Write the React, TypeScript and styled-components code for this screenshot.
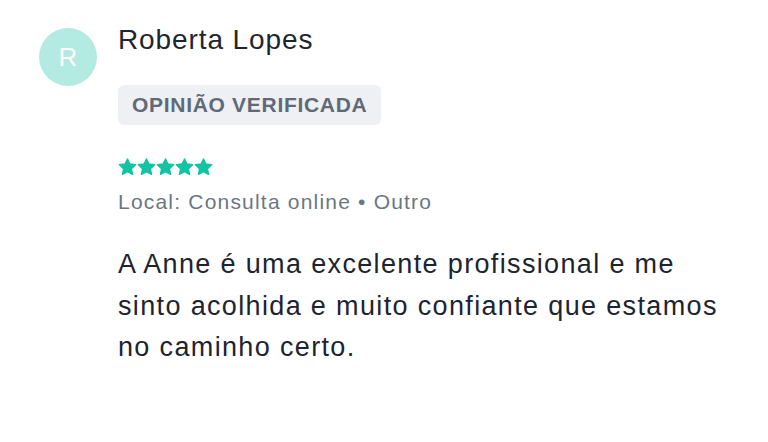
import React from "react";
import styled, { createGlobalStyle } from "styled-components";

const GlobalStyle = createGlobalStyle`
  html, body {
    margin: 0;
    padding: 0;
    background: #ffffff;
  }
  body {
    font-family: "Liberation Sans", Arial, Helvetica, sans-serif;
    -webkit-font-smoothing: antialiased;
  }
`;

const Page = styled.div`
  width: 768px;
  height: 442px;
  box-sizing: border-box;
  padding: 23px 0 0 39px;
  background: #ffffff;
  overflow: hidden;
`;

const Review = styled.article`
  display: flex;
  align-items: flex-start;
  gap: 21px;
`;

const Avatar = styled.div`
  flex: 0 0 auto;
  width: 58px;
  height: 58px;
  margin-top: 5px;
  border-radius: 50%;
  background: #b3ebe2;
  color: #ffffff;
  display: flex;
  align-items: center;
  justify-content: center;
  font-size: 26px;
  line-height: 1;
`;

const Content = styled.div`
  display: flex;
  flex-direction: column;
  align-items: flex-start;
  width: 620px;
`;

const Name = styled.h2`
  margin: 0;
  font-size: 28px;
  line-height: 34px;
  font-weight: 400;
  letter-spacing: 0.9px;
  color: #1f2630;
`;

const Badge = styled.span`
  margin-top: 28px;
  height: 40px;
  box-sizing: border-box;
  padding: 0 14px;
  display: inline-flex;
  align-items: center;
  border-radius: 6px;
  background: #eef0f3;
  color: #5f6a78;
  font-size: 21px;
  font-weight: 700;
  letter-spacing: 0.7px;
`;

const Stars = styled.div`
  margin-top: 33px;
  display: flex;
  gap: 0;
`;

const Meta = styled.p`
  margin: 13px 0 0;
  font-size: 21px;
  line-height: 26px;
  letter-spacing: 1.2px;
  color: #6b7684;
`;

const Body = styled.p`
  margin: 29px 0 0;
  font-size: 27px;
  line-height: 41.5px;
  letter-spacing: 1.35px;
  color: #1d2430;
`;

const Star: React.FC = () => (
  <svg width="19" height="18" viewBox="0 0 24 23" aria-hidden="true" style={{ display: "block" }}>
    <polygon
      points="12,1.2 15.1,7.7 22.4,8.6 17,13.6 18.4,20.9 12,17.3 5.6,20.9 7,13.6 1.6,8.6 8.9,7.7"
      fill="#12c4a4"
      stroke="#12c4a4"
      strokeWidth="1.8"
      strokeLinejoin="round"
    />
  </svg>
);

export default function App() {
  return (
    <>
      <GlobalStyle />
      <Page>
        <Review>
          <Avatar>R</Avatar>
          <Content>
            <Name>Roberta Lopes</Name>
            <Badge>OPINIÃO VERIFICADA</Badge>
            <Stars>
              {[0, 1, 2, 3, 4].map((i) => (
                <Star key={i} />
              ))}
            </Stars>
            <Meta>Local: Consulta online • Outro</Meta>
            <Body>
              A Anne é uma excelente profissional e me sinto acolhida e muito confiante que estamos no caminho certo.
            </Body>
          </Content>
        </Review>
      </Page>
    </>
  );
}
